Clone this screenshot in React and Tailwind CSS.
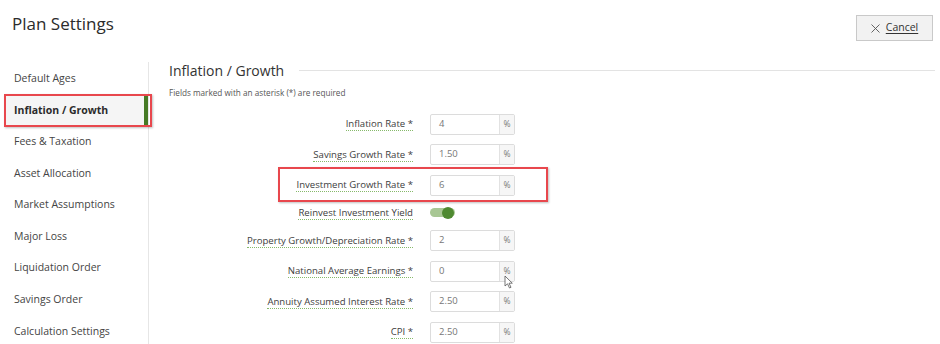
import React from "react";

const menu = [
  "Default Ages",
  "Inflation / Growth",
  "Fees & Taxation",
  "Asset Allocation",
  "Market Assumptions",
  "Major Loss",
  "Liquidation Order",
  "Savings Order",
  "Calculation Settings",
];

const fields = [
  { label: "Inflation Rate *", value: "4" },
  { label: "Savings Growth Rate *", value: "1.50" },
  { label: "Investment Growth Rate *", value: "6", marked: true },
  { label: "Reinvest Investment Yield", toggle: true },
  { label: "Property Growth/Depreciation Rate *", value: "2" },
  { label: "National Average Earnings *", value: "0", cursor: true },
  { label: "Annuity Assumed Interest Rate *", value: "2.50" },
  { label: "CPI *", value: "2.50" },
];

function Field({ field }) {
  return (
    <div
      className={`relative flex items-center ${
        field.toggle ? "h-[25px]" : "h-[30.5px]"
      }`}
    >
      <div className="w-[244px] flex justify-end">
        <span className="text-[9.6px] font-medium text-[#3d3d3d] leading-[13px] border-b border-dotted border-[#86b96a]">
          {field.label}
        </span>
      </div>
      <div className="ml-[17px]">
        {field.toggle ? (
          <div className="relative w-[25px] h-[12px] flex items-center">
            <div className="w-[25px] h-[9px] rounded-full bg-[#a8c794]" />
            <div className="absolute right-[1px] top-0 w-[12px] h-[12px] rounded-full bg-[#4f8a31]" />
          </div>
        ) : (
          <div className="flex w-[85px] h-[21px] border border-[#dcdcdc] rounded-[2px] bg-white">
            <div className="flex-1 flex items-center pl-[8px] text-[9.5px] text-[#777]">
              {field.value}
            </div>
            <div className="w-[15px] flex items-center justify-center border-l border-[#e2e2e2] bg-[#f6f6f6] text-[8.5px] text-[#777]">
              %
            </div>
          </div>
        )}
      </div>
      {field.marked && (
        <div className="absolute left-[109px] top-[-3px] w-[270px] h-[35px] border-2 border-[#e8474d] shadow-[1px_1px_2px_rgba(0,0,0,0.25)]" />
      )}
      {field.cursor && (
        <svg
          className="absolute left-[335px] top-[19px]"
          width="10"
          height="14"
          viewBox="0 0 10 14"
        >
          <path
            d="M1 1 L1 11 L3.5 8.8 L5.5 13 L7 12.3 L5 8.2 L8.3 8.2 Z"
            fill="white"
            stroke="#555"
            strokeWidth="0.8"
            strokeLinejoin="round"
          />
        </svg>
      )}
    </div>
  );
}

export default function App() {
  return (
    <div
      className="w-[940px] h-[344px] bg-white overflow-hidden text-[#333]"
      style={{ fontFamily: '"Open Sans", "Noto Sans", sans-serif' }}
    >
      <div className="flex justify-between items-start h-[56px]">
        <h1 className="ml-[12px] mt-[12px] text-[17px] leading-[24px] font-medium text-[#2b2b2b]">
          Plan Settings
        </h1>
        <button className="mt-[15px] mr-[7px] w-[77px] h-[26px] flex items-center justify-center gap-[6px] bg-[#f2f2f2] border border-[#c9c9c9] text-[10.5px] text-[#333]">
          <svg width="9" height="9" viewBox="0 0 9 9">
            <path d="M0.5 0.5 L8.5 8.5 M8.5 0.5 L0.5 8.5" stroke="#555" strokeWidth="0.9" />
          </svg>
          <span className="underline underline-offset-2">Cancel</span>
        </button>
      </div>

      <div className="flex h-[288px]">
        <div className="w-[149px] mt-[6px] pt-[1px] border-r border-[#e6e6e6]">
          {menu.map((item) => {
            const active = item === "Inflation / Growth";
            return (
              <div
                key={item}
                className={`relative ml-[6px] h-[31.6px] flex items-center pl-[8px] text-[10.5px] ${
                  active ? "bg-[#f5f5f5] font-bold text-[#2b2b2b]" : "text-[#444]"
                }`}
              >
                {item}
                {active && (
                  <>
                    <div className="absolute right-0 top-0 bottom-0 w-[4px] bg-[#467a25]" />
                    <div className="absolute left-[-2px] right-[-4px] top-[-1px] bottom-[-1px] border-2 border-[#e8474d] shadow-[1px_1px_2px_rgba(0,0,0,0.25)]" />
                  </>
                )}
              </div>
            );
          })}
        </div>

        <div className="flex-1 pl-[20px] pr-[5px]">
          <div className="h-[28px] flex items-center gap-[15px]">
            <h2 className="text-[14px] text-[#333] whitespace-nowrap">
              Inflation / Growth
            </h2>
            <div className="flex-1 h-px bg-[#e3e3e3]" />
          </div>
          <p className="mt-[3px] text-[8.2px] leading-[12px] text-[#555]">
            Fields marked with an asterisk (*) are required
          </p>
          <div className="mt-[9.75px] flex flex-col">
            {fields.map((f) => (
              <Field key={f.label} field={f} />
            ))}
          </div>
        </div>
      </div>
    </div>
  );
}
